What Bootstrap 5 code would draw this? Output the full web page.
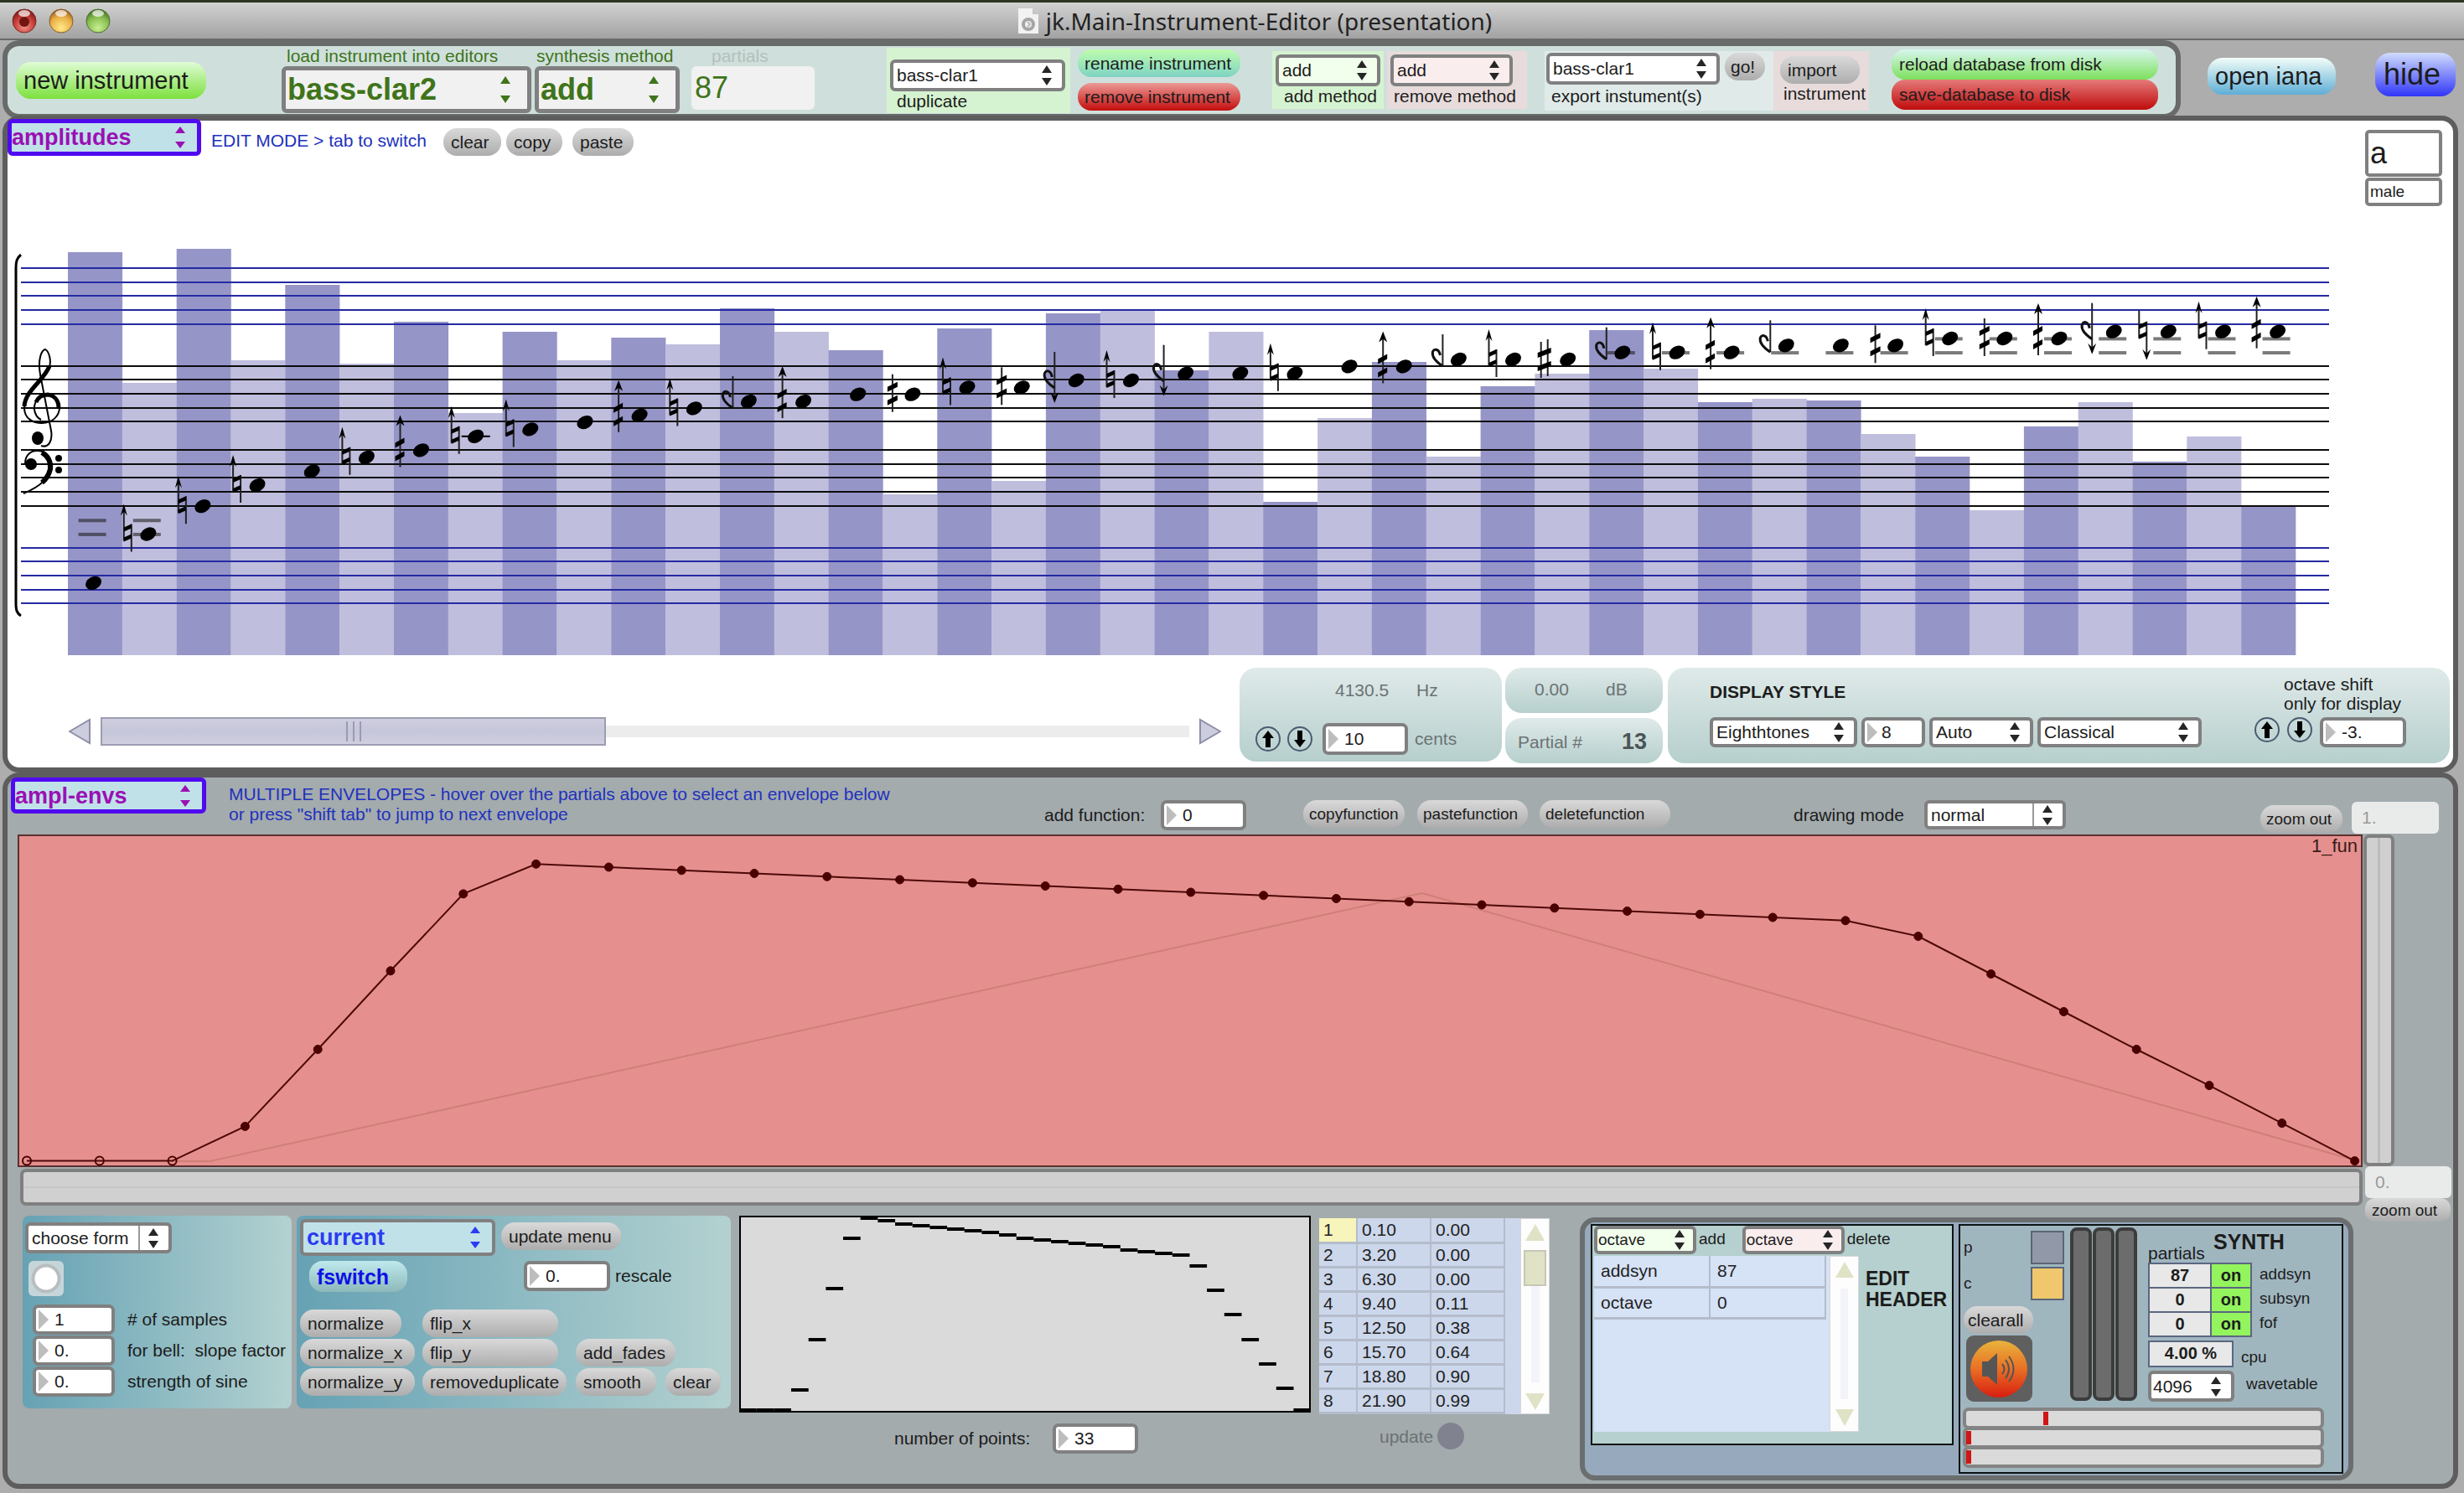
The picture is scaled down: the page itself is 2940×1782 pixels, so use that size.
<!DOCTYPE html>
<html lang="en">
<head>
<meta charset="utf-8">
<meta name="viewport" content="width=device-width, initial-scale=1">
<title>jk.Main-Instrument-Editor (presentation)</title>
<link href="https://cdn.jsdelivr.net/npm/bootstrap@5.3.0/dist/css/bootstrap.min.css" rel="stylesheet">
<style>
:root{--ar:url("data:image/svg+xml,%3Csvg xmlns='http://www.w3.org/2000/svg' viewBox='0 0 12 24'%3E%3Cpath d='M0 9L6 0L12 9ZM0 15L6 24L12 15Z' fill='%23262626'/%3E%3C/svg%3E");
--ar-green:url("data:image/svg+xml,%3Csvg xmlns='http://www.w3.org/2000/svg' viewBox='0 0 12 32'%3E%3Cpath d='M0 9L6 0L12 9ZM0 23L6 32L12 23Z' fill='%233f741a'/%3E%3C/svg%3E");
--ar-violet:url("data:image/svg+xml,%3Csvg xmlns='http://www.w3.org/2000/svg' viewBox='0 0 12 26'%3E%3Cpath d='M0 8L6 0L12 8ZM0 18L6 26L12 18Z' fill='%239a10b4'/%3E%3C/svg%3E");
--ar-blue:url("data:image/svg+xml,%3Csvg xmlns='http://www.w3.org/2000/svg' viewBox='0 0 12 26'%3E%3Cpath d='M0 8L6 0L12 8ZM0 18L6 26L12 18Z' fill='%232a3cf0'/%3E%3C/svg%3E");}
body{background:#adadad;font:21px/24px "Liberation Sans",Arial,sans-serif;color:#1c1c1c;min-height:100vh}
button,select,input{font-family:inherit;color:inherit}
label,p{margin:0}
/* window title */
.titlebar{height:48px;background:linear-gradient(#d2d2d2,#a2a2a2);border-top:3px solid #2c3622;border-bottom:2px solid #6a6a6a;font:28px/40px "Noto Sans","Open Sans",sans-serif;color:#222;padding-left:14px}
.title-mid{padding-right:78px}
/* shared parts */
.frame{border:6px solid #5d5d5d;border-radius:20px;margin:0 7px 0 3px}
.pill{border:0;border-radius:16px;height:33px;padding:0 9px;text-align:left;font-size:21px;line-height:30px;white-space:nowrap;background:linear-gradient(#d9d9d9,#adadad);flex:none}
.pill-big{height:44px;font-size:29px;line-height:40px;border-radius:18px}
.drop{appearance:none;border:4px solid #808080;border-radius:6px;height:38px;padding:0 0 0 4px;font-size:21px;line-height:28px;background:#fff var(--ar) no-repeat right 12px center/12px 24px;flex:none}
.drop-main{height:56px;border-width:5px;font-size:36px;line-height:44px;font-weight:700;color:#3f741a;background:#f1f1f1 var(--ar-green) no-repeat right 20px center/12px 32px;padding:0 0 0 2px}
.drop-tab{height:44px;border:5px solid #4f0af0;font-weight:700;font-size:27px;line-height:34px;color:#9a10b4;background:#c1e1e9 var(--ar-violet) no-repeat right 14px center/12px 26px;padding:0;position:relative}
.drop-cur{border:4px solid #808080;color:#2a3cf0;background-image:var(--ar-blue);padding-left:4px}
.drop-line{background-image:linear-gradient(#999,#999),var(--ar);background-size:2px 100%,12px 24px;background-position:right 34px center,right 12px center}
.num{appearance:none;border:4px solid #808080;border-radius:7px;height:36px;padding:0 0 0 22px;font-size:21px;line-height:28px;flex:none;background:#fff url("data:image/svg+xml,%3Csvg xmlns='http://www.w3.org/2000/svg' viewBox='0 0 12 24'%3E%3Cpath d='M0 0L12 12L0 24Z' fill='%23bdbdbd'/%3E%3C/svg%3E") no-repeat 3px center/12px 24px}
.tint-green{background-color:#f1ffec}.tint-pink{background-color:#faeded}
.ink-blue{color:#2231bd}
.ghost{border:0;border-radius:6px;background:#e9ebea;color:#9a9a9a;height:38px;padding:0 12px;font-size:21px}
.plate{background:linear-gradient(#dfeae9,#b6cfcd);border-radius:20px}
.dim{color:#6c7274}
.small-ui{font-size:19px}
.bx{height:36px;line-height:35px}
.knob{width:30px;height:30px;border:2px solid #4b5b70;border-radius:50%;background:none;padding:0;display:flex;align-items:center;justify-content:center;flex:none}
.pan{appearance:none;width:100%;height:34px;margin:0;background:linear-gradient(#ececec,#ececec) no-repeat center/100% 14px;display:block}
.pan::-webkit-slider-thumb{appearance:none;width:603px;height:34px;border:2px solid #9c9cb2;background:linear-gradient(90deg,#9a9ab4 2px,transparent 2px 8px,#9a9ab4 8px 10px,transparent 10px 16px,#9a9ab4 16px 18px) no-repeat center/18px 24px,linear-gradient(#cfcfe0,#c6c6da 50%,#cfcfe0)}
.arrow{border:0;background:none;padding:0;width:26px;height:30px;flex:none;display:block}
.rail{appearance:none;display:block;margin:0;border:4px solid #808080;border-radius:7px;background:#d0d0d0}
.rail::-webkit-slider-thumb{appearance:none;width:6px;height:6px;background:transparent}
.rail-h{width:100%;height:44px;background:linear-gradient(#d0d0d0 48%,#c6c6c6 48% 54%,#d0d0d0 54%)}
.rail-v{width:37px;height:396px;background:linear-gradient(90deg,#d0d0d0 44%,#bcbcbc 44% 54%,#d0d0d0 54%)}
.rail-red{width:431px;height:26px;background:#dadada;border-color:#848484}
.rail-red+.rail-red{margin-top:-3px}
.rail-red::-webkit-slider-thumb{width:6px;height:16px;background:#d01515}
.teal{background:linear-gradient(90deg,#66a2b4,#b3d1d0);border-radius:8px;height:230px}
/* toolbar */
.tools{height:94px;margin:0 0 -4px 3px;background:#cfe0dc;border-color:#686b6a;border-top-width:7px;width:2599px}
.zone{padding:4px;height:69px}
.zone label{display:block;padding-left:6px;line-height:24px}
.zone select{display:block}
#newinst{width:227px;margin:19px 0 0 10px;background:linear-gradient(#dffcd6,#7ce03c)}
.tools>div{flex:none}
.t-load,.t-synth,.t-part{color:#3f741a;white-space:nowrap}
.t-load label,.t-synth label,.t-part label{line-height:24px;padding-left:6px}
.t-load{margin-left:90px;width:298px}.t-load select{width:298px;display:block}
.t-synth{margin-left:4px;width:173px}.t-synth label{padding-left:2px}.t-synth select{width:173px;display:block}
.t-part{margin-left:14px;width:147px}.t-part label{color:#b5bfbb;padding-left:24px}
#parts{width:147px;height:52px;border:0;border-radius:6px;background:#f1f1f1;font-size:36px;color:#3f741a;padding:0 4px;display:block}
.t-dup{background:#d5f3d0;width:219px;height:78px;margin:2px 0 0 86px;padding-top:14px}.t-dup select{width:209px}.t-dup label{padding-left:8px}
.t-ren{margin:4px 0 0 9px;gap:7px}.t-ren .pill{width:194px;padding:0 8px}
.pill-mint{background:linear-gradient(#bdfcae,#7fd3c4)}
.pill-red{background:linear-gradient(#eb9a96,#c40d0d)}
.t-add{background:#d5f3d0;width:133px;margin:6px 0 0 38px}.t-add select{width:125px}.t-add label{padding-left:10px}
.t-rem{background:#e7dbdb;width:167px;margin:6px 0 0 4px}.t-rem select{width:146px}.t-rem label{padding-left:4px}
.t-exp{background:#e0eae9;width:273px;height:71px;margin:6px 0 0 21px;padding:2px}.t-exp select{width:207px}.t-exp .pill{margin-left:6px;width:48px;padding:0 7px}
.t-exp label{line-height:28px}
.t-imp{background:#e7dbdb;width:114px;height:71px;margin:6px 0 0;padding:6px 8px}.t-imp .pill{width:95px}.t-imp label{padding-left:4px}
.t-db{margin:4px 0 0 27px}.t-db .pill{width:318px;height:36px;line-height:32px}
.pill-lime{background:linear-gradient(#d8f6ee,#7ce05c)}
.pill-save{background:linear-gradient(#e57a7a,#c00c0c)}
#iana{margin:21px 0 0;width:153px;background:linear-gradient(#f2fdf8,#5eaed6)}
#hide{margin:15px 10px 0 47px;width:96px;height:52px;font-size:36px;line-height:48px;border-radius:18px;background:linear-gradient(#d0dcfc,#3036f8);padding:0 10px}
/* score panel */
.score{background:#fff;height:784px}
.tab-a{width:231px;margin-top:-2px}
.mode-txt{margin:12px 0 0 12px;width:277px}
.score .pill{margin-top:9px}
#b-clear{width:69px}#b-copy{width:67px;margin-left:6px}#b-paste{width:73px;margin-left:12px}
.voice{margin:11px 13px 0 auto;width:92px}
.voice input{display:block;width:92px;border:4px solid #808080;border-radius:5px;padding:0 2px}
#va{height:56px;font-size:36px}#vm{height:34px;font-size:19px;margin-top:1px}
.foot{padding:7px 4px 0 73px}
.scroller{margin:59px 22px 0 0}
.p-hz{width:313px;height:112px;padding-top:13px;margin-right:4px}
.p-hz .line1{padding-left:114px;line-height:28px}.p-hz .line1 span:first-child{width:97px}
.p-hz .line2{padding:25px 0 0 19px}
#cents{width:102px;height:38px}
.p-db{height:54px;padding-left:35px;line-height:51px}.p-pt{height:54px;margin-top:6px;padding-left:15px;line-height:57px}
.p-db span:first-child{width:85px}
.p-pt b{font-size:27px;margin-left:auto;margin-right:19px;color:#4c5456}
.p-mid{width:188px;margin-right:6px}
.p-ds{width:933px;height:114px;padding:0 52px 0 50px}
.ds-l{padding-top:17px}.ds-l>div{gap:5px;padding-top:18px}
.ds-l .drop{height:36px}
#s1{width:176px}#s2{width:76px;padding-left:20px}#s3{width:124px}#s4{width:196px}
.ds-r{padding-top:8px;line-height:23px}.ds-r label{padding-left:35px}.ds-r>div{gap:9px;padding-top:5px}#oct{width:103px}
/* envelope panel */
.envs{background:#a3abad;height:855px}
.top-b{height:68px}
#tab-e{width:233px;margin-left:4px;height:43px}
.env-txt{margin:8px 0 0 27px;width:973px;white-space:nowrap}
.ctl{margin-top:27px}
#l-addf{width:139px}#addf{width:102px}
#cf{width:121px;margin-left:68px}#pf{width:132px;margin-left:15px}#df{width:156px;margin-left:14px}
#cf,#pf,#df,#zo1{padding:0 7px}
#l-dm{margin-left:147px;width:156px}#dm{width:169px;height:35px}
#zo1{width:98px;margin:33px 11px 0 auto}#z1{width:104px;margin:29px 17px 0 0}
.graph-row{margin-bottom:-7px}
.graph-col{margin-left:12px}
.hold-h{padding:2px 0 0 3px}
.right-col{width:107px;margin-left:1px}
#z0{width:103px;margin-left:2px;display:block}#zo2{width:102px;margin-left:2px;height:28px;line-height:25px;padding:0 8px;border-radius:12px;display:block}
.low{padding-left:18px}
.f-form{width:321px;padding:8px 0 0 3px}
#cform{width:175px;height:37px;display:block}
.bang{display:block;width:42px;height:42px;margin:9px 0 0 4px;border:0;border-radius:6px;background:radial-gradient(circle at center,#fff 0 13px,#b9bdbf 14px 17px,#c5d6da 18px)}
.trio{display:grid;grid-template-columns:98px 1fr;grid-auto-rows:37px;column-gap:15px;align-items:center;margin:9px 0 0 9px;line-height:34px}
.trio label{white-space:nowrap}
.f-cur{width:518px;margin-left:6px;padding:4px 0 0 4px}
#cur{width:233px}#upm{width:143px;margin:4px 0 0 7px}
.r2{margin:6px 0 0 11px;line-height:35px}
#fsw{width:117px;height:37px;font-size:25px;font-weight:700;color:#0d10e8;line-height:34px;background:linear-gradient(#bfe9ec,#8db9bb)}
#resc{width:103px;margin:0 6px 0 139px}
.ops{display:grid;grid-template-columns:137px 172px 1fr;column-gap:9px;margin-top:21px}
.ops .d-flex{gap:2px}.ops .pill{align-self:flex-start}
.ops>div:nth-child(1) .pill{width:137px}.ops>div:nth-child(1) .pill:first-child{width:121px}
.ops>div:nth-child(2) .pill{width:162px}.ops>div:nth-child(2) .pill:last-child{width:172px}
.ops>div:nth-child(3){margin-left:2px}.ops>div:nth-child(3) .pill{width:119px}
.ops>div:nth-child(3) div{gap:11px}.ops>div:nth-child(3) div .pill{width:96px}.ops>div:nth-child(3) div .pill:last-child{width:66px}
.f-step{width:682px;margin-left:10px}.np{padding:13px 0 0 185px}.np label{width:189px}#npts{width:102px}
.f-tab{width:275px;margin:3px 0 0 10px}.tabwrap{background:#ccd7eb}
.cells{border-collapse:collapse;table-layout:fixed;color:#222}
.cells td{border:0 solid #b4bccb;border-width:0 2px 3px 0;background:#ccd7eb;padding:0 0 0 5px;overflow:hidden}
.cells-pts{width:221px}.cells-pts tr{height:29px}.cells-pts td{line-height:26px}
.cells-pts tr:first-child td:first-child{background:#f7f5bb}
.cells-head{width:276px}.cells-head td{background:#d6e2f6;height:37px;padding-left:8px}
.ca{width:45px}.cb{width:88px}.cc{width:138px}
.lift{background:#fdfdfd;width:35px;flex:none;border:1px solid #d5d8dc}
.upd{padding:9px 0 0 72px;gap:5px}.upd label{line-height:36px}#upd{width:32px;height:32px;border-radius:50%;border:0;background:#808290;margin-top:1px}
.deck{border-color:#6b6e6e;background:#97a9bc;width:923px;height:314px;border-radius:18px;margin:2px 0 0 36px;padding:2px 0 0 7px}
.f-head{width:433px;height:264px;border:2px solid #0b1414;background:#b5d0ce;padding-left:2px}
.hd .drop{height:34px;width:122px;padding-left:1px;line-height:24px;background-position:right 10px center}.hd label{padding:4px 0 0 3px}.hd{height:36px}
#od{margin-left:20px}
.hcells{width:281px;background:#d6e2f6;height:210px}
.eh{font-size:23px;line-height:25px;padding:15px 0 0 8px}
.f-synth{width:459px;height:298px;border:2px solid #0b1414;background:#a0b6bf;margin-left:6px;padding:2px 0 0 3px}
.swatch{width:40px;height:40px;border:2px solid #5a6577;padding:0;display:block}
.sw-p{background:#9199a8}.sw-c{background:#f0c76d}
.pc{width:121px;padding:4px 0 0 1px;font-size:19px}.pc>.d-flex{height:43px;line-height:40px}
#call{width:83px;margin:4px 0 2px;display:block;padding:0 5px}#spk{border:0;background:none;padding:0;display:block;margin-left:3px;line-height:0}
.meters{gap:1px;margin-left:7px}
.meter-bar{width:26px;height:207px;border:4px solid #3c3c3c;border-radius:8px;background:#6c6c6c}
.syn-r{margin-left:13px}
.sh{height:42px}.sh span{padding-top:19px;width:78px}.sh b{font-size:25px;line-height:34px}
.onoff{display:grid;grid-template-columns:72px 46px;width:124px;border:2px solid #5b6780;gap:2px;background:#5b6780}
.onoff>*{height:27px;background:#e8e8e8;text-align:center;font-weight:700;font-size:20px;line-height:27px;padding:0;border:0}
.onoff button{background:#93f45d}
.names{padding-left:9px}.names div{height:29px;line-height:28px}
.cpu{padding-top:4px}.cpu b{width:102px;height:32px;border:2px solid #5b6780;background:#e8e8e8;text-align:center;font-size:20px;line-height:26px}.cpu span{padding:8px 0 0 9px}
.wt{padding-top:4px}.wt label{padding:4px 0 0 14px}#wt{width:103px;height:37px;padding-left:2px}
.reds{padding-top:7px}
</style>
</head>
<body class="d-flex flex-column">

<header class="titlebar d-flex align-items-center">
  <svg width="118" height="34" viewBox="0 0 118 34" aria-hidden="true">
    <defs>
      <radialGradient id="gr" cx=".5" cy=".75" r=".7"><stop offset="0" stop-color="#f08f86"/><stop offset=".6" stop-color="#c8403a"/><stop offset="1" stop-color="#7c1a18"/></radialGradient>
      <radialGradient id="gy" cx=".5" cy=".8" r=".8"><stop offset="0" stop-color="#ffe98a"/><stop offset=".6" stop-color="#eab046"/><stop offset="1" stop-color="#93561c"/></radialGradient>
      <radialGradient id="gg" cx=".5" cy=".8" r=".8"><stop offset="0" stop-color="#c8ef92"/><stop offset=".6" stop-color="#86bd4e"/><stop offset="1" stop-color="#3e6d23"/></radialGradient>
    </defs>
    <g stroke-width="1"><circle cx="15" cy="17" r="14" fill="url(#gr)" stroke="#7c2a26"/><circle cx="59" cy="17" r="14" fill="url(#gy)" stroke="#8c5c28"/><circle cx="103" cy="17" r="14" fill="url(#gg)" stroke="#4c7030"/></g>
    <circle cx="15" cy="18" r="6" fill="#701512"/>
    <g fill="#fff" opacity=".7"><ellipse cx="15" cy="8" rx="7" ry="4"/><ellipse cx="59" cy="8" rx="7" ry="4"/><ellipse cx="103" cy="8" rx="7" ry="4"/></g>
  </svg>
  <div class="d-flex align-items-center gap-2 mx-auto title-mid">
    <svg width="26" height="30" viewBox="0 0 26 30" aria-hidden="true"><path d="M1 0h17l7 7v23H1z" fill="#f2f2f2"/><path d="M18 0v7h7z" fill="#c4c4c4"/><circle cx="13" cy="19" r="6" fill="none" stroke="#a5a5a5" stroke-width="4"/><path d="M12 16l3 3-3 3" fill="none" stroke="#bbb" stroke-width="2"/></svg>
    <span>jk.Main-Instrument-Editor (presentation)</span>
  </div>
</header>

<div class="d-flex">
  <section class="frame tools d-flex">
    <button class="pill pill-big" id="newinst">new instrument</button>
    <div class="t-load"><label for="load" class="d-block">load instrument into editors</label><select id="load" class="drop drop-main"><option>bass-clar2</option></select></div>
    <div class="t-synth"><label for="meth" class="d-block">synthesis method</label><select id="meth" class="drop drop-main"><option>add</option></select></div>
    <div class="t-part"><label for="parts" class="d-block">partials</label><input id="parts" value="87"></div>
    <div class="zone t-dup"><select id="dup" class="drop"><option>bass-clar1</option></select><label for="dup">duplicate</label></div>
    <div class="t-ren d-flex flex-column"><button class="pill pill-mint">rename instrument</button><button class="pill pill-red">remove instrument</button></div>
    <div class="zone t-add"><select id="addm" class="drop tint-green"><option>add</option></select><label for="addm">add method</label></div>
    <div class="zone t-rem"><select id="remm" class="drop tint-pink"><option>add</option></select><label for="remm">remove method</label></div>
    <div class="zone t-exp"><div class="d-flex"><select id="exp" class="drop"><option>bass-clar1</option></select><button class="pill">go!</button></div><label for="exp">export instument(s)</label></div>
    <div class="zone t-imp"><button id="imp" class="pill">import</button><label for="imp">instrument</label></div>
    <div class="t-db d-flex flex-column"><button class="pill pill-lime">reload database from disk</button><button class="pill pill-save">save-database to disk</button></div>
  </section>
  <div class="d-flex ms-auto"><button id="iana" class="pill pill-big">open iana</button><button id="hide" class="pill">hide</button></div>
</div>

<main class="flex-grow-1">
<section class="frame score">
  <div class="d-flex align-items-start">
    <select class="drop drop-tab tab-a" aria-label="editor"><option>amplitudes</option></select>
    <p class="ink-blue mode-txt">EDIT MODE &gt; tab to switch</p>
    <button class="pill" id="b-clear">clear</button><button class="pill" id="b-copy">copy</button><button class="pill" id="b-paste">paste</button>
    <div class="voice"><input id="va" value="a" aria-label="vowel"><input id="vm" value="male" aria-label="voice"></div>
  </div>
  <svg id="staff" class="d-block w-100" viewBox="9 246 2918 544" role="img" aria-label="partials on staves with amplitude bars"></svg>
  <div class="d-flex align-items-start foot">
    <div class="d-flex flex-grow-1 scroller">
      <button class="arrow" aria-label="scroll left"><svg width="26" height="34" viewBox="0 0 26 34"><path d="M1 17L25 3V31Z" fill="#cdcde0" stroke="#8f8fa8" stroke-width="2"/></svg></button>
      <div class="flex-grow-1 mx-2 px-1"><input type="range" class="pan" value="0" aria-label="scroll partials"></div>
      <button class="arrow" aria-label="scroll right"><svg width="26" height="34" viewBox="0 0 26 34"><path d="M25 17L1 3V31Z" fill="#cdcde0" stroke="#8f8fa8" stroke-width="2"/></svg></button>
    </div>
    <div class="plate p-hz">
      <div class="d-flex dim line1"><span>4130.5</span><span>Hz</span></div>
      <div class="d-flex align-items-center gap-2 line2"><button class="knob" aria-label="up"><svg width="16" height="20" viewBox="0 0 16 20"><path d="M8 0L15 9H11V20H5V9H1Z"/></svg></button><button class="knob" aria-label="down"><svg width="16" height="20" viewBox="0 0 16 20"><path d="M8 20L15 11H11V0H5V11H1Z"/></svg></button><input id="cents" class="num ms-1" value="10"><label for="cents" class="dim">cents</label></div>
    </div>
    <div class="p-mid">
      <div class="plate p-db d-flex dim"><span>0.00</span><span>dB</span></div>
      <div class="plate p-pt d-flex dim"><span>Partial #</span><b>13</b></div>
    </div>
    <div class="plate p-ds d-flex">
      <div class="ds-l"><b class="d-block">DISPLAY STYLE</b>
        <div class="d-flex">
          <select class="drop" id="s1" aria-label="tuning"><option>Eighthtones</option></select><input class="num" id="s2" value="8" aria-label="division"><select class="drop" id="s3" aria-label="clef mode"><option>Auto</option></select><select class="drop" id="s4" aria-label="notation"><option>Classical</option></select>
        </div></div>
      <div class="ms-auto ds-r"><label for="oct" class="d-block">octave shift<br>only for display</label>
        <div class="d-flex"><button class="knob" aria-label="octave up"><svg width="16" height="20" viewBox="0 0 16 20"><path d="M8 0L15 9H11V20H5V9H1Z"/></svg></button><button class="knob" aria-label="octave down"><svg width="16" height="20" viewBox="0 0 16 20"><path d="M8 20L15 11H11V0H5V11H1Z"/></svg></button><input id="oct" class="num" value="-3."></div></div>
    </div>
  </div>
</section>

<section class="frame envs">
  <div class="d-flex align-items-start top-b">
    <select class="drop drop-tab" id="tab-e" aria-label="envelope editor"><option>ampl-envs</option></select>
    <p class="ink-blue env-txt">MULTIPLE ENVELOPES - hover over the partials above to select an envelope below<br>or press "shift tab" to jump to next envelope</p>
    <div class="d-flex ctl"><label for="addf" class="bx" id="l-addf">add function:</label><input id="addf" class="num" value="0">
    <button class="pill small-ui" id="cf">copyfunction</button><button class="pill small-ui" id="pf">pastefunction</button><button class="pill small-ui" id="df">deletefunction</button>
    <label for="dm" class="bx" id="l-dm">drawing mode</label><select id="dm" class="drop drop-line"><option>normal</option></select></div>
    <button class="pill small-ui" id="zo1">zoom out</button><input class="ghost" id="z1" value="1." aria-label="vertical zoom">
  </div>
  <div class="d-flex align-items-start graph-row">
    <div class="flex-grow-1 graph-col">
      <svg id="env" class="d-block w-100" viewBox="0 0 2798 397" role="img" aria-label="envelope function"></svg>
      <div class="hold-h"><input type="range" class="rail rail-h" aria-label="horizontal zoom"></div>
    </div>
    <div class="right-col"><input type="range" class="rail rail-v" aria-label="vertical range"><input class="ghost" id="z0" value="0." aria-label="horizontal zoom value"><button class="pill small-ui" id="zo2">zoom out</button></div>
  </div>
  <div class="d-flex align-items-start low">
    <div class="teal f-form">
      <select class="drop drop-line" id="cform" aria-label="form"><option>choose form</option></select>
      <button class="bang" aria-label="bang"></button>
      <div class="trio"><input class="num" id="n1" value="1"><label for="n1"># of samples</label><input class="num" id="n2" value="0."><label for="n2">for bell:&nbsp; slope factor</label><input class="num" id="n3" value="0."><label for="n3">strength of sine</label></div>
    </div>
    <div class="teal f-cur">
      <div class="d-flex"><select class="drop drop-tab drop-cur" id="cur" aria-label="current function"><option>current</option></select><button class="pill" id="upm">update menu</button></div>
      <div class="d-flex r2"><button class="pill" id="fsw">fswitch</button><input class="num" id="resc" value="0."><label for="resc">rescale</label></div>
      <div class="ops"><div class="d-flex flex-column"><button class="pill">normalize</button><button class="pill">normalize_x</button><button class="pill">normalize_y</button></div><div class="d-flex flex-column"><button class="pill">flip_x</button><button class="pill">flip_y</button><button class="pill">removeduplicate</button></div><div class="d-flex flex-column justify-content-end"><button class="pill">add_fades</button><div class="d-flex"><button class="pill">smooth</button><button class="pill">clear</button></div></div></div>
    </div>
    <div class="f-step">
      <svg id="steps" class="d-block w-100" viewBox="0 0 682 235" role="img" aria-label="sampled envelope"></svg>
      <div class="d-flex np"><label for="npts" class="bx">number of points:</label><input class="num" id="npts" value="33"></div>
    </div>
    <div class="f-tab">
      <div class="d-flex tabwrap"><table class="cells cells-pts"><colgroup><col class="ca"><col class="cb"><col class="cb"></colgroup><tbody id="pts"></tbody></table>
        <div class="lift ms-auto"><svg width="33" height="231" viewBox="0 0 33 231"><path d="M5 26L17 6L28 26Z" fill="#e0e2c6"/><rect x="12" y="80" width="10" height="115" fill="#f3f4fa"/><rect x="4" y="38" width="25" height="41" fill="#e0e2c6" stroke="#c6c8b4" stroke-width="2"/><path d="M5 208L17 228L28 208Z" fill="#e0e2c6"/></svg></div></div>
      <div class="d-flex upd"><label for="upd" class="dim">update</label><button id="upd" aria-label="update"></button></div>
    </div>
    <div class="frame deck d-flex">
      <div class="f-head">
        <div class="d-flex small-ui hd"><select class="drop tint-green small-ui" id="oa"><option>octave</option></select><label for="oa">add</label><select class="drop tint-pink small-ui" id="od"><option>octave</option></select><label for="od">delete</label></div>
        <div class="d-flex"><div class="hcells"><table class="cells cells-head"><colgroup><col class="cc"><col class="cc"></colgroup><tbody><tr><td>addsyn</td><td>87</td></tr><tr><td>octave</td><td>0</td></tr></tbody></table></div>
        <div class="lift"><svg width="33" height="208" viewBox="0 0 33 208"><path d="M6 25L17 6L28 25Z" fill="#e0e2c6"/><rect x="12" y="38" width="9" height="132" fill="#f3f4fa"/><path d="M6 182L17 202L28 182Z" fill="#e0e2c6"/></svg></div>
        <b class="eh">EDIT<br>HEADER</b></div>
      </div>
      <div class="f-synth">
        <div class="d-flex align-items-start">
          <div class="pc"><div class="d-flex justify-content-between"><span>p</span><button class="swatch sw-p" aria-label="p"></button></div><div class="d-flex justify-content-between"><span>c</span><button class="swatch sw-c" aria-label="c"></button></div>
            <button class="pill" id="call">clearall</button>
            <button id="spk" aria-label="audio on"><svg width="79" height="79" viewBox="0 0 79 79"><defs><linearGradient id="sp" x2="0" y2="1"><stop offset="0" stop-color="#e9b33c"/><stop offset=".5" stop-color="#e96f24"/><stop offset="1" stop-color="#d81e10"/></linearGradient></defs><rect width="79" height="79" rx="9" fill="#5f5f5f"/><circle cx="39" cy="40" r="34" fill="url(#sp)"/><path d="M19 31H26L37 21V59L26 49H19Z" fill="#555"/><g fill="none" stroke="#555" stroke-width="2"><path d="M43 34Q48 40 43 46M47 29Q55 40 47 51M51 25Q62 40 51 55"/></g></svg></button></div>
          <div class="d-flex meters"><div class="meter-bar"></div><div class="meter-bar"></div><div class="meter-bar"></div></div>
          <div class="syn-r">
            <div class="d-flex sh"><span>partials</span><b>SYNTH</b></div>
            <div class="d-flex"><div class="onoff"><span>87</span><button>on</button><span>0</span><button>on</button><span>0</span><button>on</button></div><div class="small-ui names"><div>addsyn</div><div>subsyn</div><div>fof</div></div></div>
            <div class="d-flex cpu small-ui"><b>4.00 %</b><span>cpu</span></div>
            <div class="d-flex wt small-ui"><select class="drop" id="wt"><option>4096</option></select><label for="wt">wavetable</label></div>
          </div>
        </div>
        <div class="reds"><input type="range" class="rail rail-red" value="22" aria-label="level 1"><input type="range" class="rail rail-red" value="0" aria-label="level 2"><input type="range" class="rail rail-red" value="0" aria-label="level 3"></div>
      </div>
    </div>
  </div>
</section>
</main>

<script src="https://cdn.jsdelivr.net/npm/bootstrap@5.3.0/dist/js/bootstrap.bundle.min.js"></script>
<script>
// Score view: amplitude bars, four staves, and one note per partial
const tops=[301,457,297,430,340,434,384,493,396,430,403,411,368,396,418,590,392,574,374,371,442,396,599,499,432,545,461,446,394,440,480,476,478,518,545,609,509,480,551,521,604];
const steps=[45,38,34,31,29,27,26,24,23,22,21,20,19,19,18,18,17,17,16,16,15,15,15,14,14,13,13,13,12,12,12,11,11,11,10,10,10,9,9,9,9];
const acc='- nu nu nu - nu su nu nu - su nu q su - s nu s qd nu qd - nu - su q nu ss q nu su q - s nu s su qd nd nu su'.split(' ');
const glyph={
 nu:'<path d="M-29-30V8M-20-12V21" class="gl"/><path d="M-29-8L-20-12V-7L-29-3ZM-29 4L-20 0V5L-29 9ZM-29-36L-25-22L-29-27L-33-22Z"/>',
 nd:'<path d="M-35-25V8M-26-12V28" class="gl"/><path d="M-35-8L-26-12V-7L-35-3ZM-35 4L-26 0V5L-35 9ZM-26 34L-31 21L-26 26L-21 21Z"/>',
 su:'<path d="M-25-36V20" class="gl"/><path d="M-31-9L-20-15V-9L-31-3ZM-31 7L-20 1V7L-31 13ZM-25-42L-20-29L-25-33L-30-29Z"/>',
 s:'<path d="M-24-24V21" class="gl"/><path d="M-30-9L-18-15V-9L-30-3ZM-30 7L-18 1V7L-30 13Z"/>',
 ss:'<path d="M-32-21V22M-24-24V20" class="gl"/><path d="M-36-8L-20-14V-8L-36-2ZM-36 8L-20 2V8L-36 14Z"/>',
 q:'<path d="M-19-30V8" class="gl"/><path d="M-19 8C-28 2-32-4-31-9C-29-14-23-12-22-5" class="gb"/>',
 qd:'<path d="M-26-34V22" class="gl"/><path d="M-26 9C-35 3-39-3-38-8C-36-14-30-11-29-4" class="gb"/><path d="M-26 27L-31 14L-26 19L-21 14Z"/>'};
let h='<style>.gl{fill:none;stroke:#222;stroke-width:2}.gb{fill:none;stroke:#111;stroke-width:3}</style>';
const bw=2658/41;
tops.forEach((t,i)=>{h+=`<rect x="${(81+i*bw).toFixed(1)}" y="${t}" width="${(bw+.3).toFixed(1)}" height="${782-t}" fill="${i%2?'#c0bedd':'#9695c8'}"/>`});
[0,1,2,3,4,7,8,9,10,11,13,14,15,16,17,20,21,22,23,24].forEach(k=>{const y=Math.round(320+k*16.68),b=k<5||k>19;
 h+=`<path d="M25 ${y}H2779" stroke="${b?'#252aa2':'#0c0c0c'}" stroke-width="2"/>`});
h+='<path d="M25 304C20 308 19 312 19 320V720C19 728 20 732 25 735" fill="none" stroke="#000" stroke-width="3"/>';
h+='<g fill="none" stroke="#000" stroke-width="2"><path d="M49 532C58 535 63 526 61 514L48 447C45 430 49 418 54 417C59 420 62 432 58 441C52 456 29 466 29 487C29 500 40 505 50 505C62 505 71 497 71 486C71 476 63 471 57 471C47 471 40 480 41 489C42 496 45 499 49 501"/><path stroke-width="5" d="M59 437C52 455 30 466 29 485M43 480C46 473 51 471 57 471C65 472 70 478 70 487"/></g><ellipse cx="45" cy="523" rx="7" ry="8"/>';
h+='<g fill="none" stroke="#000"><path stroke-width="2" d="M30 553C30 543 37 538 44 538C54 538 61 544 61 556C60 572 45 582 28 589"/><path stroke-width="6" d="M50 540C58 545 61 552 60 560C58 568 55 572 50 576"/></g><circle cx="37" cy="554" r="7"/><circle cx="70" cy="547" r="4"/><circle cx="70" cy="561" r="4"/>';
steps.forEach((s,i)=>{const x=+(111.6+i*65.15).toFixed(1),y=+(320.6+s*8.34).toFixed(1);
 const led=[];if(i<2)led.push(36,38);if(i>=28)led.push(12);if(i>=34)led.push(10);
 led.forEach(k=>h+=`<rect x="${x-18}" y="${320+k*8.34-1}" width="33" height="4" fill="#222" opacity=".6"/>`);
 if(s===24)h+=`<rect x="${x-17}" y="${y-1}" width="34" height="2"/>`;
 h+=`<g transform="translate(${x} ${y})"><ellipse rx="10" ry="7.5" transform="rotate(-28)"/>${glyph[acc[i]]||''}</g>`});
document.getElementById('staff').innerHTML=h;

// Break-point envelope
const ey=[739,739,739,717,668,618,569,550,552,554,556,558,560,562,564,566,568,570,572,574,576,578,580,582,584,586,596,620,644,668,691,715,739];
const P=ey.map((y,i)=>[+(11+i*86.8).toFixed(1),+(y*1.875-996).toFixed(1)]);
let e='<rect x="1" y="1" width="2796" height="395" fill="#e5908e" stroke="#5e2f2f" stroke-width="2"/>';
e+='<path d="M184 390H230L1676 70L2786 388" fill="none" stroke="#cf7f78" stroke-width="2"/>';
e+=`<polyline points="${P.join(' ')}" fill="none" stroke="#4e0808" stroke-width="2"/>`;
P.forEach((p,i)=>e+=`<circle cx="${p[0]}" cy="${p[1]}" r="5" fill="${i<3?'none':'#4a0000'}" stroke="#4a0000" stroke-width="${i<3?2:1}"/>`);
e+='<text x="2792" y="21" text-anchor="end" font-size="22" fill="#3a1a1a">1_fun</text>';
document.getElementById('env').innerHTML=e;

// Sampled step view
const sv=[1028,1028,1028,957,776,594,413,343,350,362,369,375,382,388,394,401,413,419,425,432,438,444,457,463,469,475,513,601,688,776,863,951,1028];
let g='<rect x="1" y="1" width="680" height="233" fill="#dadada" stroke="#000" stroke-width="2"/>';
sv.forEach((v,i)=>g+=`<rect x="${(i*20.67).toFixed(1)}" y="${Math.round((v-333)/3-2)}" width="20.7" height="4"/>`);
document.getElementById('steps').innerHTML=g;

// Point list
document.getElementById('pts').innerHTML=[['0.10','0.00'],['3.20','0.00'],['6.30','0.00'],['9.40','0.11'],['12.50','0.38'],['15.70','0.64'],['18.80','0.90'],['21.90','0.99']].map((r,i)=>`<tr><td>${i+1}</td><td>${r[0]}</td><td>${r[1]}</td></tr>`).join('');
</script>
</body>
</html>
